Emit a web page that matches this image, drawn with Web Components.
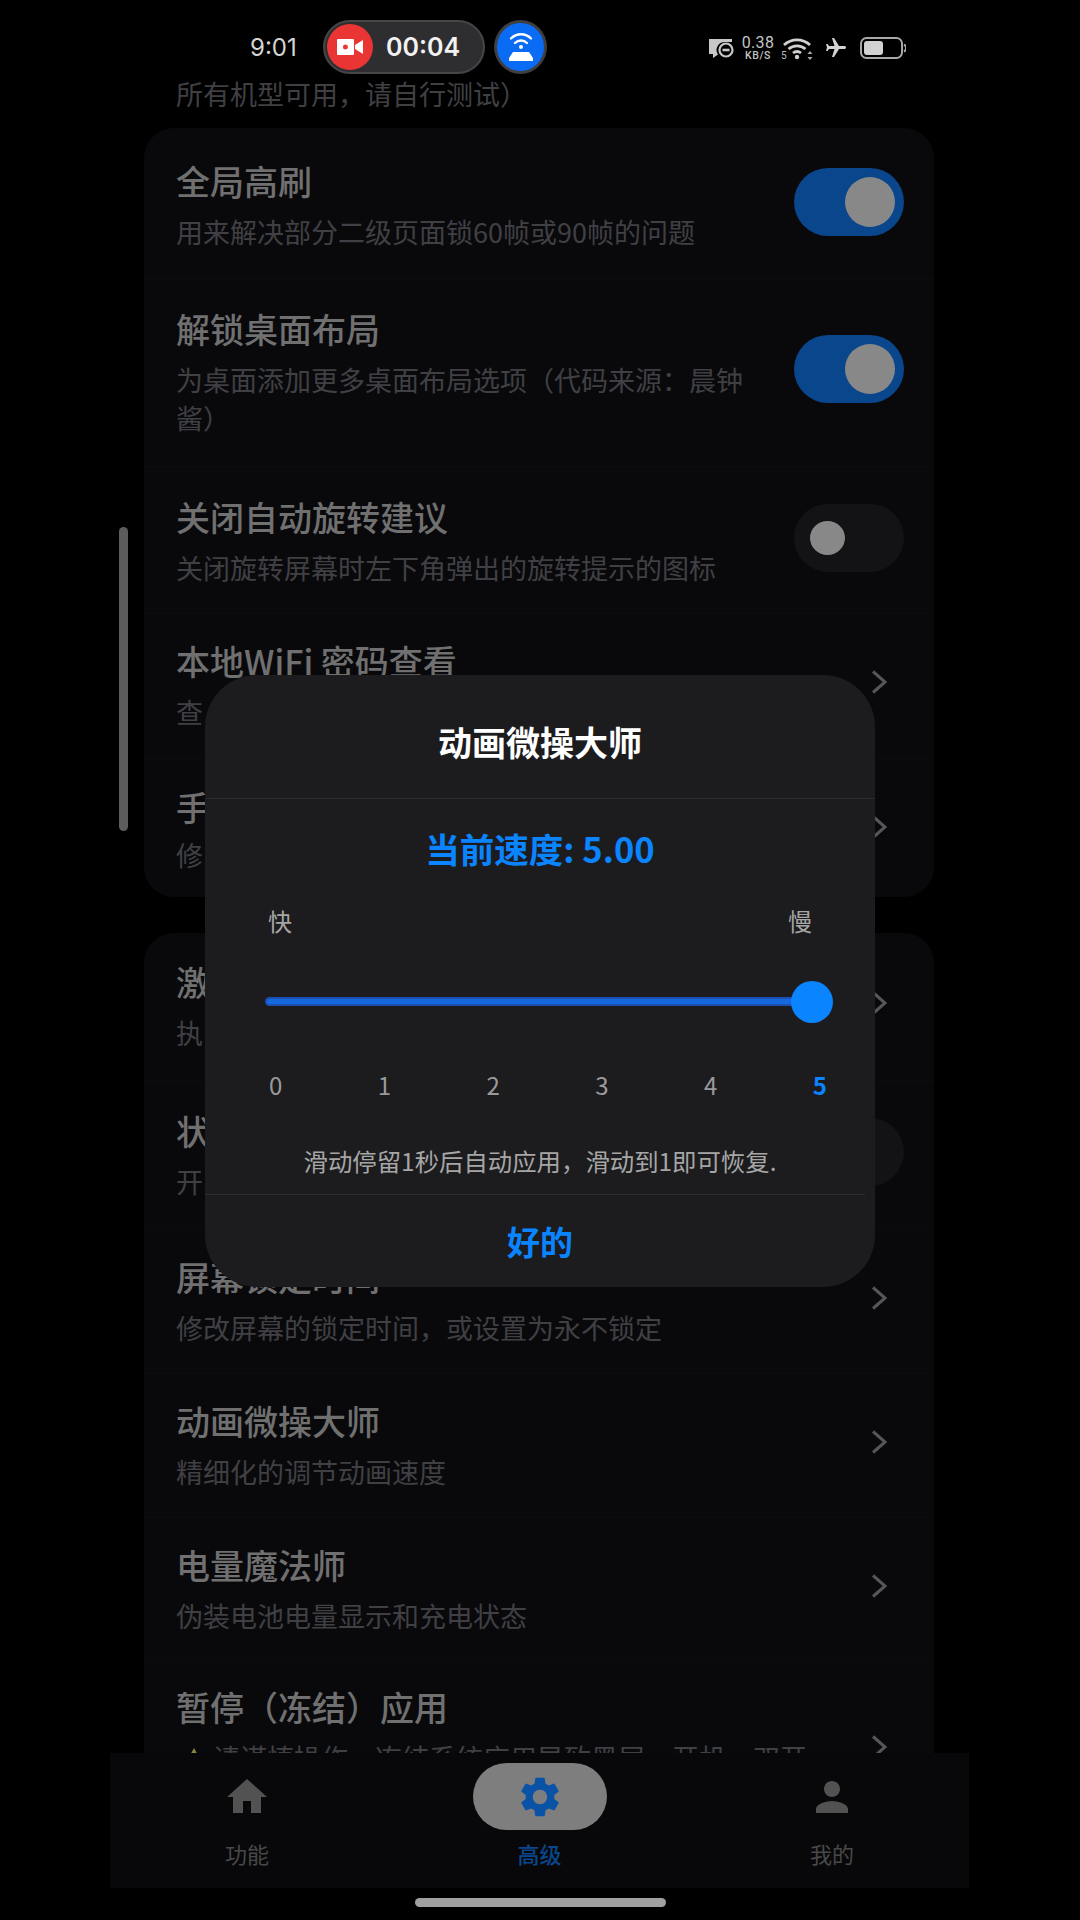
<!DOCTYPE html>
<html lang="zh">
<head>
<meta charset="utf-8">
<title>高级</title>
<style>
  html, body { margin: 0; padding: 0; background: #000; }
  body {
    width: 1080px;
    height: 1920px;
    overflow: hidden;
    font-family: "Noto Sans CJK SC", "Noto Sans", sans-serif;
  }
</style>
</head>
<body>
<app-screen>
  <status-bar slot="status"></status-bar>

  <pre-text slot="list">所有机型可用，请自行测试）</pre-text>
  <set-card slot="list">
    <set-row heading="全局高刷" sub="用来解决部分二级页面锁60帧或90帧的问题" control="on" style="--pt:33px;--pb:29px"></set-row>
    <set-row heading="解锁桌面布局" sub="为桌面添加更多桌面布局选项（代码来源：晨钟酱）" control="on" style="--pt:29px;--pb:30px"></set-row>
    <set-row heading="关闭自动旋转建议" sub="关闭旋转屏幕时左下角弹出的旋转提示的图标" control="off" style="--pt:30px;--pb:27px"></set-row>
    <set-row heading="本地WiFi 密码查看" sub="查" control="chevron" style="--pt:27px;--pb:28px"></set-row>
    <set-row heading="手" sub="修" control="chevron" style="--pt:28px;--pb:23px;--gap:9px"></set-row>
  </set-card>
  <set-card slot="list">
    <set-row heading="激" sub="执" control="chevron" style="--pt:29px;--pb:29px"></set-row>
    <set-row heading="状" sub="开" control="off" style="--pt:30px;--pb:28px"></set-row>
    <set-row heading="屏幕锁定时间" sub="修改屏幕的锁定时间，或设置为永不锁定" control="chevron" style="--pt:28px;--pb:27px"></set-row>
    <set-row heading="动画微操大师" sub="精细化的调节动画速度" control="chevron" style="--pt:27px;--pb:27px"></set-row>
    <set-row heading="电量魔法师" sub="伪装电池电量显示和充电状态" control="chevron" style="--pt:27px;--pb:26px"></set-row>
    <set-row heading="暂停（冻结）应用" sub="请谨慎操作，冻结系统应用导致黑屏，开机，双开" control="chevron" warn style="--pt:26px;--pb:26px"></set-row>
  </set-card>

  <bottom-nav slot="nav">
    <nav-item label="功能" icon="home"></nav-item>
    <nav-item label="高级" icon="settings" active></nav-item>
    <nav-item label="我的" icon="person"></nav-item>
  </bottom-nav>

  <speed-dialog slot="overlay"></speed-dialog>
</app-screen>

<script>
const ICONS = {
  home: 'M10 20v-6h4v6h5v-8h3L12 3 2 12h3v8z',
  settings: 'M19.14 12.94c.04-.3.06-.61.06-.94 0-.32-.02-.64-.07-.94l2.03-1.58c.18-.14.23-.41.12-.61l-1.92-3.32c-.12-.22-.37-.29-.59-.22l-2.39.96c-.5-.38-1.03-.7-1.62-.94l-.36-2.54c-.04-.24-.24-.41-.48-.41h-3.84c-.24 0-.43.17-.47.41l-.36 2.54c-.59.24-1.13.57-1.62.94l-2.39-.96c-.22-.08-.47 0-.59.22L2.74 8.87c-.12.21-.08.47.12.61l2.03 1.58c-.05.3-.09.63-.09.94s.02.64.07.94l-2.03 1.58c-.18.14-.23.41-.12.61l1.92 3.32c.12.22.37.29.59.22l2.39-.96c.5.38 1.03.7 1.62.94l.36 2.54c.05.24.24.41.48.41h3.84c.24 0 .44-.17.47-.41l.36-2.54c.59-.24 1.13-.56 1.62-.94l2.39.96c.22.08.47 0 .59-.22l1.92-3.32c.12-.22.07-.47-.12-.61l-2.01-1.58zM12 15.6c-1.98 0-3.6-1.62-3.6-3.6s1.62-3.6 3.6-3.6 3.6 1.62 3.6 3.6-1.62 3.6-3.6 3.6z',
  person: 'M12 12c2.21 0 4-1.79 4-4s-1.79-4-4-4-4 1.79-4 4 1.79 4 4 4zm0 2c-2.67 0-8 1.34-8 4v2h16v-2c0-2.66-5.33-4-8-4z'
};

class AppScreen extends HTMLElement {
  constructor() {
    super();
    this.attachShadow({ mode: 'open' });
    this.shadowRoot.innerHTML = `
      <style>
        :host {
          display: flex;
          flex-direction: column;
          position: relative;
          width: 1080px;
          height: 1920px;
          background: #000;
          overflow: hidden;
        }
        .list {
          height: 1679px;
          overflow: hidden;
          padding: 0 146px 0 144px;
          display: flex;
          flex-direction: column;
        }
        .scrollbar {
          position: absolute;
          left: 119px;
          top: 527px;
          width: 9px;
          height: 304px;
          border-radius: 5px;
          background: #5c5c5c;
        }
        .home {
          display: flex;
          justify-content: center;
          padding-top: 10px;
        }
        .home i {
          display: block;
          width: 251px;
          height: 9px;
          border-radius: 5px;
          background: #a0a0a0;
        }
      </style>
      <slot name="status"></slot>
      <div class="list"><slot name="list"></slot></div>
      <slot name="nav"></slot>
      <div class="home"><i></i></div>
      <div class="scrollbar"></div>
      <slot name="overlay"></slot>
    `;
  }
}

class StatusBar extends HTMLElement {
  constructor() {
    super();
    this.attachShadow({ mode: 'open' });
    this.shadowRoot.innerHTML = `
      <style>
        :host {
          display: flex;
          align-items: center;
          box-sizing: border-box;
          height: 74px;
          padding: 20px 174px 0 250px;
          font-family: Inter, Roboto, sans-serif;
          color: #d4d4d4;
        }
        .time { width: 73px; font-size: 24px; }
        .pill {
          box-sizing: border-box;
          display: flex;
          align-items: center;
          width: 162px;
          height: 54px;
          padding-left: 2px;
          border: 2px solid #464648;
          border-radius: 27px;
          background: #2e2e30;
        }
        .rec {
          display: flex;
          align-items: center;
          justify-content: center;
          width: 46px;
          height: 46px;
          border-radius: 50%;
          background: #ea3535;
        }
        .timer {
          margin-left: 13px;
          font-size: 25px;
          font-weight: 600;
          color: #f2f2f2;
        }
        .hotspot {
          box-sizing: border-box;
          display: flex;
          align-items: center;
          justify-content: center;
          width: 53px;
          height: 54px;
          margin-left: 9px;
          border: 3px solid #3f3f41;
          border-radius: 50%;
          background: #0a6cf5;
        }
        .right {
          display: flex;
          align-items: center;
          margin-left: auto;
          padding-top: 2px;
        }
        .speed {
          display: flex;
          flex-direction: column;
          align-items: center;
          width: 34px;
          margin: 0 6px 0 7px;
          font-family: Roboto, sans-serif;
          color: #c4c4c4;
        }
        .speed b { font-size: 16px; font-weight: 400; line-height: 15px; letter-spacing: .3px; }
        .speed span { font-size: 10.5px; font-weight: 500; line-height: 12px; letter-spacing: .6px; }
        .plane { margin: 0 10px 0 8px; }
        svg { display: block; }
      </style>
      <div class="time">9:01</div>
      <div class="pill">
        <div class="rec">
          <svg width="28" height="18" viewBox="0 0 28 18">
            <path fill="#fff" fill-rule="evenodd" d="M1 2a1 1 0 0 1 1-1h15a1 1 0 0 1 1 1v14a1 1 0 0 1-1 1H2a1 1 0 0 1-1-1zM9.5 6.5a2.5 2.5 0 1 0 0 5 2.5 2.5 0 0 0 0-5z"/>
            <path fill="#fff" d="M19 7l8-5v14l-8-5z"/>
          </svg>
        </div>
        <div class="timer">00:04</div>
      </div>
      <div class="hotspot">
        <svg width="28" height="32" viewBox="0 0 28 32">
          <g fill="none" stroke="#fff" stroke-width="2.4" stroke-linecap="round">
            <path d="M4 7.5a14 14 0 0 1 20 0"/>
            <path d="M8 12a8.5 8.5 0 0 1 12 0"/>
          </g>
          <circle cx="14" cy="16" r="2" fill="#fff"/>
          <path fill="#fff" d="M6 21h16l4 6v3H2v-3z"/>
        </svg>
      </div>
      <div class="right">
        <svg width="26" height="22" viewBox="0 0 26 22">
          <path fill="#c8c8c8" d="M1 2h23v3H16a8 8 0 0 0-6 12.5l-5 3.5v-4H1z"/>
          <circle cx="18" cy="13" r="6.5" fill="none" stroke="#c8c8c8" stroke-width="2.2"/>
          <path stroke="#c8c8c8" stroke-width="2.6" d="M14.5 13h7"/>
        </svg>
        <div class="speed"><b>0.38</b><span>KB/S</span></div>
        <svg width="33" height="24" viewBox="0 0 33 24">
          <g fill="none" stroke="#d0d0d0" stroke-width="2.8">
            <path d="M3 9a19 19 0 0 1 26 0"/>
            <path d="M7.5 13a13 13 0 0 1 17 0"/>
            <path d="M12 17a6.5 6.5 0 0 1 8 0"/>
          </g>
          <circle cx="16" cy="21" r="2.2" fill="#d0d0d0"/>
          <text x="0" y="23" font-size="10" fill="#bdbdbd" font-family="Roboto, sans-serif">5</text>
          <path fill="#a8a8a8" d="M29 15l2.5 3h-5zM29 24l2.5-3h-5z"/>
        </svg>
        <svg class="plane" width="28" height="24" viewBox="0 0 24 24">
          <path fill="#d4d4d4" transform="rotate(90 12 12)" d="M21 16v-2l-8-5V3.5c0-.83-.67-1.5-1.5-1.5S10 2.67 10 3.5V9l-8 5v2l8-2.5V19l-2 1.5V22l3.5-1 3.5 1v-1.5L13 19v-5.5l8 2.5z"/>
        </svg>
        <svg width="46" height="22" viewBox="0 0 46 22">
          <rect x="1" y="1" width="41" height="20" rx="5.5" fill="none" stroke="#a8a8a8" stroke-width="2"/>
          <rect x="4" y="4" width="19" height="14" rx="3" fill="#d2d2d2"/>
          <path d="M44 7.5a4 4 0 0 1 0 7" fill="none" stroke="#a8a8a8" stroke-width="2"/>
        </svg>
      </div>
    `;
  }
}

class PreText extends HTMLElement {
  constructor() {
    super();
    this.attachShadow({ mode: 'open' });
    this.shadowRoot.innerHTML = `
      <style>
        :host {
          display: block;
          flex: none;
          margin: 1px 0 15px;
          padding-left: 32px;
          font-size: 27px;
          line-height: 38px;
          color: #404044;
        }
      </style>
      <slot></slot>
    `;
  }
}

class SetCard extends HTMLElement {
  constructor() {
    super();
    this.attachShadow({ mode: 'open' });
    this.shadowRoot.innerHTML = `
      <style>
        :host {
          display: block;
          flex: none;
          margin-bottom: 36px;
          border-radius: 30px;
          background: #09090c;
        }
      </style>
      <slot></slot>
    `;
  }
}

class SetRow extends HTMLElement {
  constructor() {
    super();
    this.attachShadow({ mode: 'open' });
  }

  connectedCallback() {
    this.render();
  }

  renderControl(control) {
    if (control === 'on') return '<div class="toggle on"><i></i></div>';
    if (control === 'off') return '<div class="toggle off"><i></i></div>';
    return `<svg class="chevron" width="16" height="24" viewBox="0 0 16 24">
      <path d="M2 1.5L14 12 2 22.5" fill="none" stroke="#56565a" stroke-width="3"/>
    </svg>`;
  }

  render() {
    const heading = this.getAttribute('heading') || '';
    const sub = this.getAttribute('sub') || '';
    const control = this.getAttribute('control') || 'chevron';
    // the warning row starts with a yellow triangle, clipped by the nav below
    const warn = this.hasAttribute('warn')
      ? '<svg class="warn" width="24" height="22" viewBox="0 0 24 22"><path fill="#8a853c" d="M12 0l12 22H0z"/></svg>'
      : '';

    this.shadowRoot.innerHTML = `
      <style>
        :host {
          display: flex;
          padding: var(--pt, 28px) 30px var(--pb, 28px) 32px;
          box-shadow: inset 0 -1px 0 #0c0c0f;
        }
        :host(:last-child) { box-shadow: none; }
        .text { flex: 1; min-width: 0; }
        .title {
          font-size: 34px;
          font-weight: 500;
          line-height: 40px;
          color: #707070;
        }
        .sub {
          margin-top: var(--gap, 12px);
          font-size: 27px;
          line-height: 38px;
          color: #404044;
        }
        :host([warn]) .sub { white-space: nowrap; min-height: 76px; }
        .warn {
          display: inline-block;
          margin: 0 7px 0 6px;
          vertical-align: -1px;
        }
        .side {
          flex: none;
          display: flex;
          justify-content: flex-end;
          align-self: center;
          width: 110px;
          margin: 0 0 8px 40px;
        }
        .toggle {
          box-sizing: border-box;
          display: flex;
          align-items: center;
          width: 110px;
          height: 68px;
          border-radius: 34px;
        }
        .toggle i { display: block; border-radius: 50%; background: #888; }
        .toggle.on { justify-content: flex-end; padding-right: 9px; background: #0a468c; }
        .toggle.on i { width: 50px; height: 50px; }
        .toggle.off { padding-left: 16px; background: #131315; }
        .toggle.off i { width: 35px; height: 34px; }
        .chevron { display: block; margin-right: 17px; }
      </style>
      <div class="text">
        <div class="title">${heading}</div>
        <div class="sub">${warn}${sub}</div>
      </div>
      <div class="side">${this.renderControl(control)}</div>
    `;
  }
}

class BottomNav extends HTMLElement {
  constructor() {
    super();
    this.attachShadow({ mode: 'open' });
    this.shadowRoot.innerHTML = `
      <style>
        :host {
          display: flex;
          justify-content: space-between;
          flex: none;
          box-sizing: border-box;
          height: 135px;
          margin: 0 111px 0 110px;
          padding: 10px 70px 0 70px;
          background: #08080a;
        }
      </style>
      <slot></slot>
    `;
  }
}

class NavItem extends HTMLElement {
  constructor() {
    super();
    this.attachShadow({ mode: 'open' });
  }

  connectedCallback() {
    const label = this.getAttribute('label') || '';
    const path = ICONS[this.getAttribute('icon')] || '';
    this.shadowRoot.innerHTML = `
      <style>
        :host {
          display: flex;
          flex-direction: column;
          align-items: center;
          width: 134px;
        }
        .icon {
          display: flex;
          align-items: center;
          justify-content: center;
          width: 134px;
          height: 67px;
          border-radius: 34px;
          color: #525252;
        }
        :host([active]) .icon { background: #7e7e7e; color: #0a52a6; }
        .label {
          margin-top: 8px;
          font-size: 22px;
          line-height: 30px;
          color: #484848;
        }
        :host([active]) .label { color: #0a468c; font-weight: 500; }
        svg { display: block; }
      </style>
      <div class="icon">
        <svg width="48" height="48" viewBox="0 0 24 24"><path fill="currentColor" d="${path}"/></svg>
      </div>
      <div class="label">${label}</div>
    `;
  }
}

class SpeedDialog extends HTMLElement {
  constructor() {
    super();
    this.attachShadow({ mode: 'open' });
    const ticks = [0, 1, 2, 3, 4, 5]
      .map(n => `<span class="${n === 5 ? 'now' : ''}">${n}</span>`)
      .join('');
    this.shadowRoot.innerHTML = `
      <style>
        :host {
          position: absolute;
          left: 205px;
          top: 675px;
          display: flex;
          flex-direction: column;
          width: 670px;
          height: 612px;
          border-radius: 52px;
          background: #1c1c1e;
        }
        .head {
          display: flex;
          align-items: center;
          justify-content: center;
          box-sizing: border-box;
          height: 124px;
          padding-top: 9px;
          border-bottom: 1px solid #2c2c2e;
          font-size: 34px;
          font-weight: 700;
          color: #fff;
        }
        .speed {
          margin-top: 26px;
          font-size: 34.5px;
          font-weight: 700;
          line-height: 46px;
          text-align: center;
          color: #0a84ff;
        }
        .ends {
          display: flex;
          justify-content: space-between;
          margin: 33px 63px 0 63px;
          font-size: 24px;
          line-height: 34px;
          color: #a6a6a6;
        }
        .slider {
          position: relative;
          height: 42px;
          margin: 43px 42px 0 60px;
        }
        .track {
          position: absolute;
          left: 0;
          right: 20px;
          top: 16px;
          height: 5px;
          border: 2px solid #1b4fb4;
          border-radius: 5px;
          background: #1668dc;
        }
        .thumb {
          position: absolute;
          right: 0;
          top: 0;
          width: 42px;
          height: 42px;
          border-radius: 50%;
          background: #0a84ff;
        }
        .ticks {
          display: flex;
          justify-content: space-between;
          margin: 46px 48px 0 64px;
          font-size: 24px;
          line-height: 32px;
          color: #9a9a9a;
        }
        .ticks .now { color: #0a84ff; font-weight: 700; }
        .hint {
          margin-top: 43px;
          font-size: 24.4px;
          line-height: 34px;
          text-align: center;
          color: #a6a6a6;
        }
        .rule {
          margin: 16px 10px 0 0;
          height: 1px;
          background: #2e2e30;
        }
        .ok {
          flex: 1;
          display: flex;
          align-items: center;
          justify-content: center;
          font-size: 33px;
          font-weight: 700;
          color: #0a84ff;
        }
      </style>
      <div class="head">动画微操大师</div>
      <div class="speed">当前速度: 5.00</div>
      <div class="ends"><span>快</span><span>慢</span></div>
      <div class="slider"><div class="track"></div><div class="thumb"></div></div>
      <div class="ticks">${ticks}</div>
      <div class="hint">滑动停留1秒后自动应用，滑动到1即可恢复.</div>
      <div class="rule"></div>
      <div class="ok">好的</div>
    `;
  }
}

customElements.define('app-screen', AppScreen);
customElements.define('status-bar', StatusBar);
customElements.define('pre-text', PreText);
customElements.define('set-card', SetCard);
customElements.define('set-row', SetRow);
customElements.define('bottom-nav', BottomNav);
customElements.define('nav-item', NavItem);
customElements.define('speed-dialog', SpeedDialog);
</script>
</body>
</html>
